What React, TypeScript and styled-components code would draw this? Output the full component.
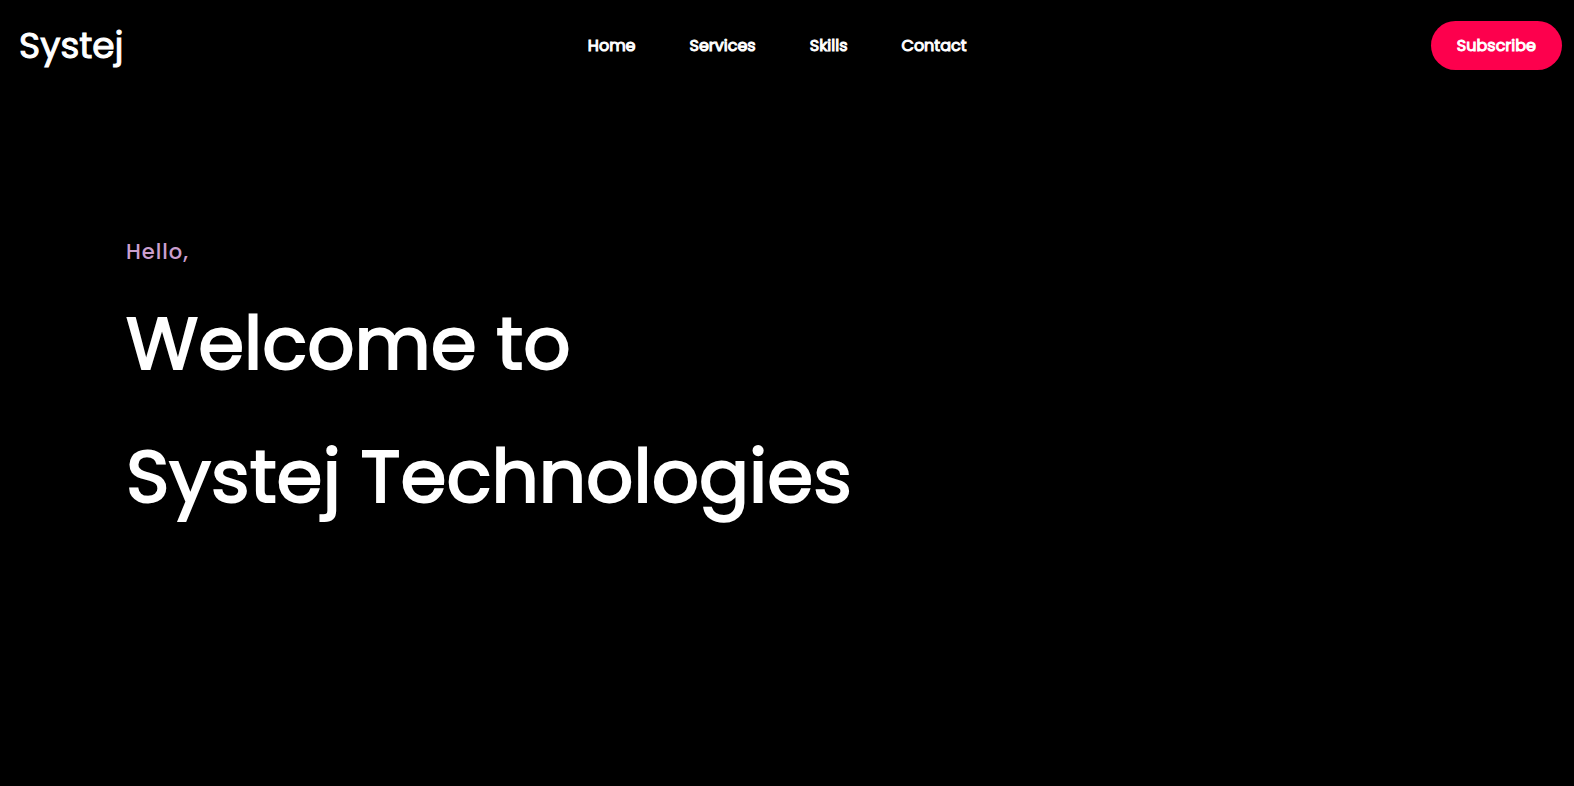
import React from "react";
import styled, { createGlobalStyle } from "styled-components";

const GlobalStyle = createGlobalStyle`
  * { box-sizing: border-box; margin: 0; padding: 0; }
  body { background: #000; color: #fff; font-family: Poppins, Lato, "Open Sans", sans-serif; }
`;

const Page = styled.div`
  min-height: 100vh;
  background: #000;
`;

const Header = styled.header`
  display: flex;
  justify-content: space-between;
  align-items: center;
  padding: 21px 12px 21px 19px;
`;

const Logo = styled.a`
  color: #fff;
  font-size: 36px;
  line-height: 49px;
  text-decoration: none;
  -webkit-text-stroke: 1px #fff;
`;

const Nav = styled.nav`
  display: flex;
  gap: 54px;
`;

const NavLink = styled.a`
  color: #fff;
  font-size: 16px;
  line-height: 24px;
  text-decoration: none;
  -webkit-text-stroke: 1px #fff;
`;

const Subscribe = styled.button`
  padding: 12px 26px;
  border: 0;
  border-radius: 25px;
  background: #fd004d;
  color: #fff;
  font-family: inherit;
  font-size: 16px;
  line-height: 25px;
  -webkit-text-stroke: 1px #fff;
  cursor: pointer;
`;

const Hero = styled.main`
  padding: 144px 8% 0;
`;

const Greeting = styled.p`
  color: #cb9fcf;
  font-size: 21px;
  font-weight: 500;
  line-height: 34px;
  letter-spacing: 1px;
`;

const Title = styled.h1`
  margin-top: 8px;
  font-size: 74px;
  font-weight: 400;
  line-height: 133px;
  -webkit-text-stroke: 2px #fff;
`;

const links = ["Home", "Services", "Skills", "Contact"];

export default function App() {
  return (
    <Page>
      <GlobalStyle />
      <Header>
        <Logo href="#home">Systej</Logo>
        <Nav>
          {links.map((label) => (
            <NavLink key={label} href={`#${label.toLowerCase()}`}>{label}</NavLink>
          ))}
        </Nav>
        <Subscribe type="button">Subscribe</Subscribe>
      </Header>
      <Hero id="home">
        <Greeting>Hello,</Greeting>
        <Title>Welcome to<br />Systej Technologies</Title>
      </Hero>
    </Page>
  );
}
